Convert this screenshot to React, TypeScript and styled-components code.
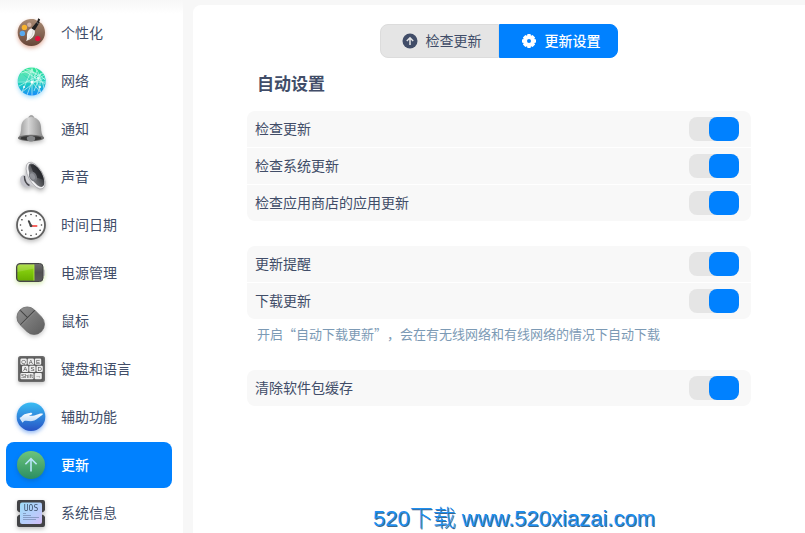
import React, { useState } from "react";
import styled, { createGlobalStyle } from "styled-components";

const GlobalStyle = createGlobalStyle`
  *, *::before, *::after { box-sizing: border-box; }
  body {
    margin: 0;
    background: #f7f7f7;
    color: #414d68;
    font-family: "Noto Sans CJK SC", "Noto Sans", sans-serif;
    font-size: 14px;
    line-height: 20px;
  }
  button, input { font: inherit; color: inherit; }
`;

const Shell = styled.div`
  position: relative;
  display: flex;
  gap: 10px;
  height: 100vh;
  overflow: hidden;
`;

const Sidebar = styled.nav`
  flex: 0 0 183px;
  padding: 10px 11px 10px 6px;
  overflow-y: auto;
  scrollbar-width: none;
  background: linear-gradient(#f7f7f7, #ffffff 14px);
`;

const NavList = styled.ul`
  display: flex;
  flex-direction: column;
  gap: 2px;
  margin: 0;
  padding: 0;
  list-style: none;
`;

const NavLink = styled.a<{ $active: boolean }>`
  display: flex;
  align-items: center;
  gap: 14px;
  height: 46px;
  padding: 0 9px;
  border-radius: 8px;
  text-decoration: none;
  color: ${(p) => (p.$active ? "#ffffff" : "#414d68")};
  background: ${(p) => (p.$active ? "#0081ff" : "transparent")};
  font-weight: ${(p) => (p.$active ? 500 : 400)};
`;

const Label = styled.span`
  padding-bottom: 2px;
`;

const Icon = styled.svg.attrs({ viewBox: "0 0 32 32", "aria-hidden": true })<{ $glow: string }>`
  flex: none;
  width: 32px;
  height: 32px;
  overflow: visible;
  filter: drop-shadow(0 2px 2px ${(p) => p.$glow});
`;

const Main = styled.main`
  flex: 1;
  min-width: 0;
  margin-top: 5px;
  padding: 19px 54px 0;
  border-radius: 8px 0 0 0;
  background: #ffffff;
`;

const TabBar = styled.div`
  display: flex;
  justify-content: center;
`;

const Tab = styled.button<{ $active: boolean }>`
  display: flex;
  align-items: center;
  justify-content: center;
  gap: 8px;
  width: 119px;
  height: 34px;
  padding: 0 0 0 4px;
  border: 1px solid ${(p) => (p.$active ? "#0081ff" : "#dcdcdc")};
  color: ${(p) => (p.$active ? "#ffffff" : "#414d68")};
  background: ${(p) => (p.$active ? "#0081ff" : "#e5e5e5")};
  font-weight: ${(p) => (p.$active ? 500 : 400)};
  cursor: pointer;

  &:first-child { border-radius: 8px 0 0 8px; }
  &:last-child { border-radius: 0 8px 8px 0; }
`;

const TabIcon = styled.svg.attrs({ viewBox: "0 0 16 16", "aria-hidden": true })`
  flex: none;
  width: 16px;
  height: 16px;
`;

const Title = styled.h2`
  margin: 13px 10px 16px;
  font-size: 17px;
  line-height: 24px;
  font-weight: 700;
`;

const Group = styled.section`
  display: flex;
  flex-direction: column;
  gap: 1px;
  margin-bottom: 25px;
  border-radius: 8px;
  overflow: hidden;
`;

const NotedGroup = styled(Group)`
  margin-bottom: 5px;
`;

const Row = styled.label`
  display: flex;
  align-items: center;
  justify-content: space-between;
  height: 36px;
  padding: 0 12px 0 8px;
  background: #f8f8f8;
`;

const Switch = styled.input.attrs({ type: "checkbox", role: "switch" })`
  appearance: none;
  display: flex;
  width: 50px;
  height: 24px;
  margin: 0;
  border-radius: 8px;
  background: #e5e5e5;
  cursor: pointer;

  &::before {
    content: "";
    width: 30px;
    height: 24px;
    border-radius: 8px;
    background: #b8b8b8;
  }
  &:checked { justify-content: flex-end; }
  &:checked::before { background: #0081ff; }
`;

const Note = styled.p`
  margin: 0 10px 26px;
  color: #7c9ab5;
  font-size: 13px;
  line-height: 20px;
  text-spacing-trim: space-all;
`;

const Watermark = styled.div`
  position: absolute;
  right: 150px;
  bottom: 0;
  color: #1d8ff0;
  font-family: "Liberation Sans", "Noto Sans CJK SC", sans-serif;
  font-size: 22px;
  line-height: 28px;
  white-space: nowrap;
  text-shadow: 1px 1px 0 #41678a;
  pointer-events: none;
`;

const WatermarkHan = styled.span`
  font-size: 23px;
  font-weight: 300;
`;

const PaletteIcon = () => (
  <Icon $glow="rgba(190, 80, 40, 0.45)">
    <defs>
      <linearGradient id="wood" x1="0" y1="0" x2="0" y2="1">
        <stop offset="0" stopColor="#a98b74" />
        <stop offset="1" stopColor="#684638" />
      </linearGradient>
    </defs>
    <path d="M14 2.3C7.500 3.200 2.700 8.900 2.700 15.500c0 7.500 6.100 13.500 13.600 13.500S30 23 30 15.500c0-3.400-1.300-6.500-3.300-8.900L20 2.400c-2-.500-4-.500-6-.1z" fill="url(#wood)" />
    <circle cx="14.300" cy="7.800" r="2.200" fill="#d2b3a3" />
    <circle cx="9.400" cy="10.400" r="2.700" fill="#f7b32e" />
    <circle cx="7.400" cy="16.400" r="2.700" fill="#58a8ed" />
    <circle cx="22.700" cy="21.600" r="2.700" fill="#e2103c" />
    <path d="M23.200 1.200l2 1.200-1 2 .5.800-5.200 8.600-3.200-2.200 6-7.400z" fill="#202020" />
    <path d="M21.500 5.400l2.200 1.400" stroke="#8c8c8c" strokeWidth=".8" />
    <path d="M16.200 11.200l3.600 2.400c.4 3.700-1.200 8.400-8.800 10.300 1.600-2 .7-4 1-6.700.4-3.300 2-5 4.200-6z" fill="#f4f3f1" />
    <path d="M18 13c.3 4-1.500 7.500-5 9.700" stroke="#c8c5c1" strokeWidth=".7" fill="none" />
  </Icon>
);

const NetworkIcon = () => (
  <Icon $glow="rgba(30, 170, 240, 0.4)">
    <defs>
      <linearGradient id="globe" x1=".4" y1="0" x2=".5" y2="1">
        <stop offset="0" stopColor="#32e592" />
        <stop offset=".55" stopColor="#1fcfc0" />
        <stop offset="1" stopColor="#168dfa" />
      </linearGradient>
      <clipPath id="globeClip"><circle cx="16.700" cy="16.500" r="14" /></clipPath>
    </defs>
    <circle cx="16.700" cy="16.500" r="14" fill="url(#globe)" />
    <g clipPath="url(#globeClip)">
      <path d="M6 8l10-5 2 13-12-8-4 8 15 1z" fill="#fff" opacity=".2" />
      <g fill="none" stroke="#e8fff8" strokeWidth=".7" opacity=".85">
        <path d="M2 17h29M17 2v29M17 4L7 27M17 4l9 24M7 27L29 10M4 21l24-13M8 5l22 14M17 17L12 30M17 17l9 11" />
        <path d="M11 4c11 3 17 11 18 20M6 8C15 5 24 8 30 15M20 3c6 6 7 16 2 27M22 5L18 17l12-4M26 8l-7 18" />
      </g>
      <g fill="#fff">
        <circle cx="17" cy="17" r="1.500" /><circle cx="23" cy="13" r="1" /><circle cx="9" cy="22" r="1" /><circle cx="25" cy="22" r="1" />
      </g>
    </g>
  </Icon>
);

const BellIcon = () => (
  <Icon $glow="rgba(0, 0, 0, 0.25)">
    <defs>
      <linearGradient id="bell" x1="0" y1="0" x2="1" y2="0">
        <stop offset="0" stopColor="#929292" /><stop offset=".4" stopColor="#d7d7d7" /><stop offset="1" stopColor="#858585" />
      </linearGradient>
    </defs>
    <path d="M13.800 5c0-3.400 5-3.400 5 0z" fill="#a8a8a8" stroke="#777" strokeWidth=".5" />
    <path d="M3 24.800C5.500 22.500 6 19 6.200 14 6.400 7.700 11 4 16.200 4s9.600 3.700 9.800 10c.2 5 .8 8.500 3.200 10.800-2.500 3-23.500 3-26.200 0z" fill="url(#bell)" />
    <ellipse cx="16" cy="25" rx="13" ry="3.200" fill="#6e6e6e" />
    <ellipse cx="16" cy="25.200" rx="10.500" ry="2.300" fill="#373737" />
    <path d="M12 24.500c1-2 7-2 8 0 .8 2.300-1.200 4-4 4s-4.800-1.700-4-4z" fill="#858789" />
  </Icon>
);

const SpeakerIcon = () => (
  <Icon $glow="rgba(0, 0, 0, 0.28)">
    <defs>
      <linearGradient id="cone" x1="0" y1="0" x2="1" y2="0">
        <stop offset="0" stopColor="#7b7c80" /><stop offset="1" stopColor="#303236" />
      </linearGradient>
    </defs>
    <path d="M6 15.500c2.300-2.600 5-2 7 1.500l4 8c-3 2-6.500 2-9.300-.4C5 22 4.500 18 6 15.500z" fill="#c3c3ca" />
    <path d="M9.500 15c0 4.500 1.500 8 5 9.500" stroke="#47474c" strokeWidth="1.500" fill="none" />
    <path d="M13 3c-3 5-3 12-2 15 1.500 4.500 8 8.500 16.500 10z" fill="#d2d2d5" />
    <ellipse cx="20.600" cy="14.600" rx="7.200" ry="14.800" transform="rotate(-29 20.600 14.600)" fill="#efeff1" stroke="#98989c" strokeWidth=".6" />
    <ellipse cx="21.300" cy="14.200" rx="5.600" ry="13" transform="rotate(-29 21.300 14.200)" fill="url(#cone)" />
    <path d="M15.500 4c6-1 12 6 13.500 15L20 16z" fill="#212226" opacity=".65" />
    <ellipse cx="18" cy="15.500" rx="3.700" ry="5.300" transform="rotate(-29 18 15.500)" fill="#77797f" />
    <ellipse cx="17.500" cy="15.500" rx="2.300" ry="3.400" transform="rotate(-29 17.500 15.500)" fill="#92949a" />
  </Icon>
);

const ClockIcon = () => (
  <Icon $glow="rgba(0, 0, 0, 0.25)">
    <circle cx="16" cy="16" r="14" fill="#fdfdfd" stroke="#616161" strokeWidth="1.800" />
    <g fill="#3e3e3e">
      {Array.from({ length: 12 }, (_, i) => (
        <circle key={i} cx="16" cy="5.500" r=".8" transform={`rotate(${i * 30} 16 16)`} />
      ))}
    </g>
    <path d="M16 17h6.300" stroke="#f4534e" strokeWidth="1.800" />
    <path d="M13.800 12.200L16 17" stroke="#444" strokeWidth="2" strokeLinecap="round" />
    <circle cx="16" cy="16.800" r="1.400" fill="#444" />
  </Icon>
);

const BatteryIcon = () => (
  <Icon $glow="rgba(120, 190, 0, 0.3)">
    <defs>
      <linearGradient id="charge" x1="0" y1="0" x2="0" y2="1">
        <stop offset="0" stopColor="#a2d92b" /><stop offset=".45" stopColor="#80c90b" /><stop offset="1" stopColor="#69af00" />
      </linearGradient>
      <linearGradient id="shellDark" x1="0" y1="0" x2="0" y2="1">
        <stop offset="0" stopColor="#6d6d6d" /><stop offset=".5" stopColor="#515151" /><stop offset="1" stopColor="#5b5b5b" />
      </linearGradient>
    </defs>
    <rect x="27" y="12.500" width="3" height="6.500" rx="1" fill="#c8c8c8" />
    <rect x="1.500" y="6.500" width="26.500" height="18" rx="3.500" fill="url(#shellDark)" stroke="#454545" />
    <path d="M5 7.500h14v16H5c-1.600 0-2.600-1-2.600-2.600V10.100c0-1.600 1-2.600 2.600-2.600z" fill="url(#charge)" />
    <path d="M5 7.500h14v4L2.500 15v-5C2.500 8.500 3.500 7.500 5 7.500z" fill="#fff" opacity=".15" />
    <path d="M19 7.500v16" stroke="#b7ed49" strokeWidth=".8" />
  </Icon>
);

const MouseIcon = () => (
  <Icon $glow="rgba(0, 0, 0, 0.22)">
    <defs>
      <linearGradient id="mouse" x1="0" y1="0" x2="0" y2="1">
        <stop offset="0" stopColor="#8c8c8c" /><stop offset="1" stopColor="#626262" />
      </linearGradient>
    </defs>
    <g transform="rotate(-45 15.700 15.700)">
      <rect x="5.400" y=".5" width="20.600" height="30.400" rx="10.300" fill="url(#mouse)" stroke="#616161" strokeWidth=".7" />
      <path d="M5.600 11.300h20.200M15.700 1v10.300" stroke="#444" strokeWidth="1" fill="none" />
      <path d="M5.600 12.300h20.200" stroke="#999" strokeWidth=".5" />
    </g>
  </Icon>
);

const KeyText = styled.text`
  font-family: "Liberation Sans", sans-serif;
  font-size: 6px;
  fill: #4a4a4a;
  text-anchor: middle;
`;

const KEYS: [number, number, number, string][] = [
  [5.400, 5.500, 6.400, "Q"], [12.600, 5.500, 6.400, "A"], [19.800, 5.500, 6.400, "E"],
  [7, 12.700, 6.400, "A"], [14.200, 12.700, 6.400, "S"], [21.400, 12.700, 6.400, "D"],
  [5.400, 19.900, 13.200, "Shift"], [19.600, 19.900, 7.200, "→"],
];

const KeyboardIcon = () => (
  <Icon $glow="rgba(0, 0, 0, 0.22)">
    <rect x="3" y="3" width="27" height="26" rx="2.500" fill="#6b6b6b" />
    <rect x="4.600" y="4.600" width="23.800" height="22.800" rx="1" fill="#595959" />
    {KEYS.map(([x, y, w, t]) => (
      <g key={`${x}-${y}`}>
        <rect x={x} y={y} width={w} height="6.300" rx="1.200" fill="#ededed" />
        <KeyText x={x + w / 2} y={y + 5.3}>{t}</KeyText>
      </g>
    ))}
  </Icon>
);

const AccessIcon = () => (
  <Icon $glow="rgba(30, 110, 230, 0.5)">
    <defs>
      <linearGradient id="access" x1="0" y1="0" x2="0" y2="1">
        <stop offset="0" stopColor="#38bdf4" /><stop offset="1" stopColor="#2753c5" />
      </linearGradient>
      <linearGradient id="hand" x1="0" y1="0" x2="0" y2="1">
        <stop offset="0" stopColor="#ffffff" /><stop offset="1" stopColor="#b9d8f8" />
      </linearGradient>
    </defs>
    <circle cx="16" cy="15.700" r="14.300" fill="url(#access)" />
    <path d="M5.200 16.900l2.800-2.700c1.700-1.700 5-2 7-2.300 1.700-.2 2.500.5 2.200 1.200-.4.800-2.300 1.100-3.200 1.500 3 .6 6-.3 8.200-1.200 2-.8 5-1.500 5.600-.6.500.9-1.600 2-3.300 3.300-2.300 1.800-4 3.700-7.400 4-2.800.3-5.600-1-8-.1L7.500 21.500z" fill="url(#hand)" />
    <path d="M5 16.700l3 4.500" stroke="#d4e8fb" strokeWidth="1.200" />
  </Icon>
);

const UpdateIcon = () => (
  <Icon $glow="rgba(20, 70, 120, 0.3)">
    <defs>
      <linearGradient id="update" x1="0" y1="0" x2="0" y2="1">
        <stop offset="0" stopColor="#6cc47c" /><stop offset="1" stopColor="#2c8e62" />
      </linearGradient>
    </defs>
    <circle cx="16" cy="16" r="14" fill="url(#update)" />
    <path d="M16 22.500V9.800M10.400 15.200L16 9.600l5.600 5.600" fill="none" stroke="#b9e5f8" strokeWidth="1.600" />
  </Icon>
);

const SystemText = styled.text`
  font-family: "DejaVu Sans Mono", monospace;
  font-size: 8px;
  fill: #3f536e;
  text-anchor: middle;
`;

const SystemIcon = () => (
  <Icon $glow="rgba(0, 0, 0, 0.25)">
    <defs>
      <linearGradient id="screen" x1="0" y1="0" x2="1" y2="1">
        <stop offset="0" stopColor="#9fdcf8" /><stop offset=".6" stopColor="#b7cdfb" /><stop offset="1" stopColor="#d3bcf5" />
      </linearGradient>
    </defs>
    <path d="M4 3h24a2 2 0 0 1 2 2v8l-1 1.500v4L30 20v8a2 2 0 0 1-2 2H4a2 2 0 0 1-2-2v-8l1-1.500v-4L2 13V5a2 2 0 0 1 2-2z" fill="#424346" />
    <rect x="5" y="5.500" width="22" height="21.500" rx="2" fill="url(#screen)" />
    <path d="M3 14.500l2 1v2l-2 1zM29 14.500l-2 1v2l2 1z" fill="#d7d7d7" />
    <SystemText x="16" y="13.800">UOS</SystemText>
    <path d="M8 16.500h3M8 18.500h8M8 20.500h16M8 22.500h13" stroke="#7b91b7" strokeWidth=".8" />
  </Icon>
);

const NAV = [
  { label: "个性化", Glyph: PaletteIcon },
  { label: "网络", Glyph: NetworkIcon },
  { label: "通知", Glyph: BellIcon },
  { label: "声音", Glyph: SpeakerIcon },
  { label: "时间日期", Glyph: ClockIcon },
  { label: "电源管理", Glyph: BatteryIcon },
  { label: "鼠标", Glyph: MouseIcon },
  { label: "键盘和语言", Glyph: KeyboardIcon },
  { label: "辅助功能", Glyph: AccessIcon },
  { label: "更新", Glyph: UpdateIcon },
  { label: "系统信息", Glyph: SystemIcon },
];

const SettingRow = ({ label }: { label: string }) => {
  const [on, setOn] = useState(true);
  return (
    <Row>
      <Label>{label}</Label>
      <Switch checked={on} onChange={() => setOn(!on)} />
    </Row>
  );
};

export default function App() {
  const [page, setPage] = useState("更新");
  const [tab, setTab] = useState("settings");
  return (
    <Shell lang="zh-CN">
      <GlobalStyle />
      <Sidebar>
        <NavList>
          {NAV.map(({ label, Glyph }) => (
            <li key={label}>
              <NavLink
                href="#"
                $active={page === label}
                aria-current={page === label ? "page" : undefined}
                onClick={(e) => {
                  e.preventDefault();
                  setPage(label);
                }}
              >
                <Glyph />
                <Label>{label}</Label>
              </NavLink>
            </li>
          ))}
        </NavList>
      </Sidebar>
      <Main>
        <TabBar role="tablist">
          <Tab type="button" role="tab" aria-selected={tab === "check"} $active={tab === "check"} onClick={() => setTab("check")}>
            <TabIcon>
              <circle cx="8" cy="8" r="7.500" fill="currentColor" />
              <path d="M8 12V5M4.800 8L8 4.800 11.200 8" fill="none" stroke="#e5e5e5" strokeWidth="1.500" />
            </TabIcon>
            <Label>检查更新</Label>
          </Tab>
          <Tab type="button" role="tab" aria-selected={tab === "settings"} $active={tab === "settings"} onClick={() => setTab("settings")}>
            <TabIcon>
              <path
                fill="currentColor"
                fillRule="evenodd"
                d="M6.500 1h3l.5 1.700 1.600-.8 2.500 2.500-.8 1.600 1.700.5v3l-1.700.5.8 1.600-2.500 2.500-1.600-.8-.5 1.700h-3L6 13.300l-1.600.8-2.500-2.500.8-1.600L1 9.500v-3L2.700 6l-.8-1.600 2.500-2.500 1.600.8zM8 6a2 2 0 1 0 0 4 2 2 0 0 0 0-4z"
              />
            </TabIcon>
            <Label>更新设置</Label>
          </Tab>
        </TabBar>
        <Title>自动设置</Title>
        <Group>
          <SettingRow label="检查更新" />
          <SettingRow label="检查系统更新" />
          <SettingRow label="检查应用商店的应用更新" />
        </Group>
        <NotedGroup>
          <SettingRow label="更新提醒" />
          <SettingRow label="下载更新" />
        </NotedGroup>
        <Note>开启“自动下载更新”，会在有无线网络和有线网络的情况下自动下载</Note>
        <Group>
          <SettingRow label="清除软件包缓存" />
        </Group>
      </Main>
      <Watermark>
        520<WatermarkHan>下载</WatermarkHan> www.520xiazai.com
      </Watermark>
    </Shell>
  );
}
